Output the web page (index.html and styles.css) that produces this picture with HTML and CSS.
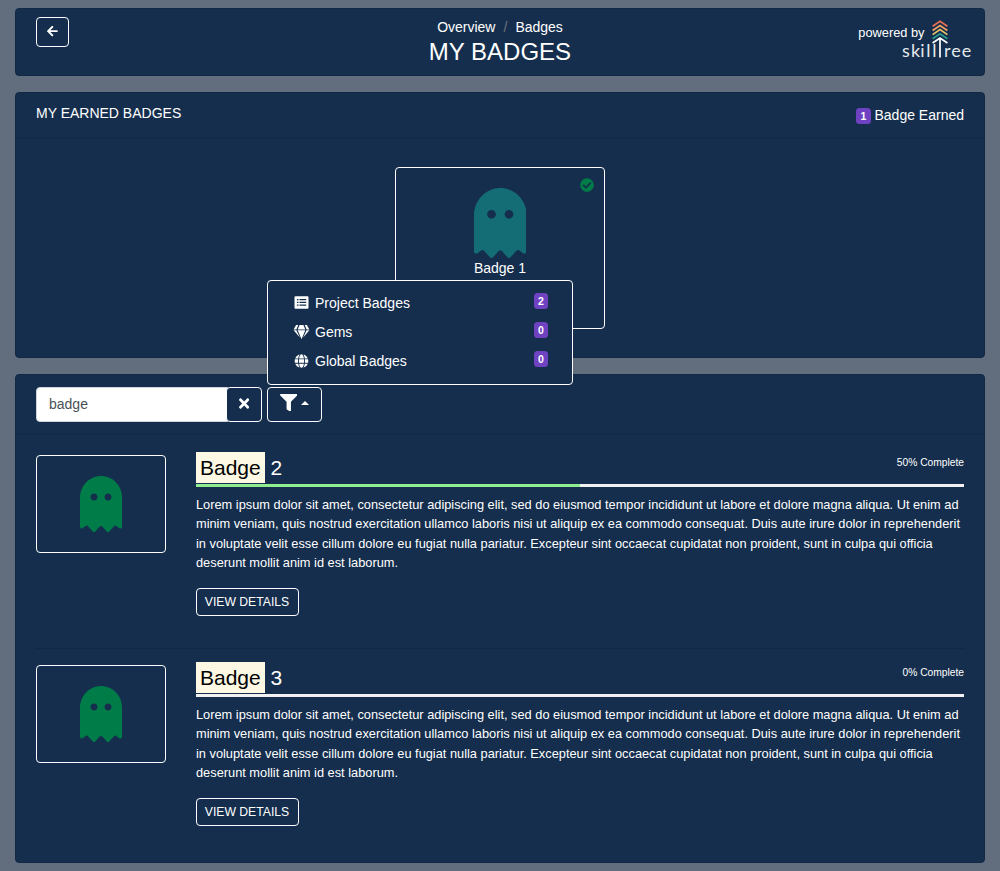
FILE: index.html
```html
<!DOCTYPE html>
<html lang="en">
<head>
<meta charset="utf-8">
<title>My Badges</title>
<link rel="stylesheet" href="styles.css">
</head>
<body>
<svg class="defs" width="0" height="0">
  <symbol id="ghost" viewBox="0 0 384 512"><path d="M186.1.09C81.01 3.24 0 94.92 0 200.05v263.92c0 14.26 17.23 21.39 27.31 11.31l24.92-18.53c6.66-4.95 16-3.99 21.51 2.21l42.95 48.35c6.25 6.25 16.38 6.25 22.63 0l40.72-45.85c6.37-7.17 17.56-7.17 23.92 0l40.72 45.85c6.25 6.25 16.38 6.25 22.63 0l42.95-48.35c5.51-6.2 14.85-7.17 21.51-2.21l24.92 18.53c10.08 10.08 27.31 2.95 27.31-11.31V192C384 84 294.83-3.17 186.1.09zM128 224c-17.67 0-32-14.33-32-32s14.33-32 32-32 32 14.33 32 32-14.33 32-32 32zm128 0c-17.67 0-32-14.33-32-32s14.33-32 32-32 32 14.33 32 32-14.33 32-32 32z"/></symbol>
</svg>
<div class="page">
  <header class="card top">
    <button class="btn back" aria-label="Back"><svg width="10.720" height="12.250" viewBox="0 0 448 512"><path d="M257.5 445.1l-22.2 22.2c-9.4 9.4-24.6 9.4-33.9 0L7 273c-9.4-9.4-9.4-24.6 0-33.9L201.4 44.7c9.4-9.4 24.6-9.4 33.9 0l22.2 22.2c9.5 9.5 9.3 25-.4 34.3L136.6 216H424c13.3 0 24 10.7 24 24v32c0 13.3-10.7 24-24 24H136.6l120.5 114.800c9.800 9.300 10 24.800.4 34.300z"/></svg></button>
    <div class="heading">
      <nav class="crumbs"><span>Overview</span><span class="slash">/</span><span>Badges</span></nav>
      <h1>MY BADGES</h1>
    </div>
    <div class="brand">
      <span class="powered">powered by</span>
      <svg class="logo" width="72" height="44" viewBox="0 0 72 44">
        <g fill="none" stroke-width="1.700">
          <path stroke="#e76f51" d="M30.600 10.200 38 5.200 45.400 10.200"/>
          <path stroke="#f4a261" d="M30.600 14.500 38 9.500 45.400 14.500"/>
          <path stroke="#e9c46a" d="M30.600 18.600 38 13.600 45.400 18.600"/>
          <path stroke="#2a9d8f" d="M30.600 22.700 38 17.700 45.400 22.700"/>
          <path stroke="#fff" d="M30.600 27 38 22 45.400 27M38 22V41.500"/>
        </g>
        <text class="wordmark" y="41" x="0 9 18.300 24.300 30.300">skill</text>
        <text class="wordmark" y="41" x="42 49.200 59.800">ree</text>
      </svg>
    </div>
  </header>

  <section class="card earned">
    <div class="card-head"><h2>MY EARNED BADGES</h2><div class="count"><span class="pill">1</span> Badge Earned</div></div>
    <div class="earned-body">
      <div class="badge-tile">
        <svg class="check" width="14" height="14" viewBox="0 0 512 512"><path d="M504 256c0 136.967-111.033 248-248 248S8 392.967 8 256 119.033 8 256 8s248 111.033 248 248zM227.314 387.314l184-184c6.248-6.248 6.248-16.379 0-22.627l-22.627-22.627c-6.248-6.249-16.379-6.249-22.628 0L216 308.118l-70.059-70.059c-6.248-6.248-16.379-6.248-22.628 0l-22.627 22.627c-6.248 6.248-6.248 16.379 0 22.627l104 104c6.249 6.249 16.379 6.249 22.628.001z"/></svg>
        <svg class="ghost-teal" width="52.5" height="70"><use href="#ghost"/></svg>
        <div class="tile-name">Badge 1</div>
      </div>
    </div>
  </section>

  <section class="card catalog">
    <div class="toolbar">
      <div class="search"><input type="text" value="badge" aria-label="Search badges"><button class="btn clear" aria-label="Clear"><svg width="10.300" height="15" viewBox="0 0 352 512"><path d="M242.720 256l100.070-100.070c12.280-12.280 12.280-32.190 0-44.480l-22.240-22.240c-12.280-12.280-32.190-12.280-44.480 0L176 189.280 75.930 89.210c-12.280-12.280-32.190-12.280-44.480 0L9.210 111.450c-12.280 12.280-12.280 32.190 0 44.480L109.280 256 9.210 356.070c-12.280 12.280-12.280 32.190 0 44.480l22.240 22.240c12.280 12.280 32.200 12.280 44.480 0L176 322.720l100.070 100.070c12.280 12.280 32.200 12.280 44.480 0l22.240-22.240c12.280-12.280 12.280-32.190 0-44.480L242.720 256z"/></svg></button></div>
      <div class="filter">
        <button class="btn filter-btn" aria-label="Filter"><svg width="17.500" height="17.500" viewBox="0 0 512 512"><path d="M487.976 0H24.028C2.710 0-8.047 25.866 7.058 40.971L192 225.941V432c0 7.831 3.821 15.170 10.237 19.662l80 55.980C298.020 518.690 320 507.493 320 487.980V225.941l184.947-184.970C520.021 25.896 509.338 0 487.976 0z"/></svg><span class="caret"></span></button>
        <div class="menu">
          <div class="item"><svg width="15" height="15" viewBox="0 0 15 15"><path fill-rule="evenodd" d="M1.500 1.300h12a1 1 0 0 1 1 1v10.400a1 1 0 0 1-1 1h-12a1 1 0 0 1-1-1V2.300a1 1 0 0 1 1-1zM2.900 3.900V5.200H4.500V3.900zM5.500 3.900V5.200H12.200V3.900zM2.900 6.700V8H4.500V6.700zM5.500 6.700V8H12.200V6.700zM2.900 9.500V10.800H4.500V9.500zM5.500 9.500V10.800H12.200V9.500z"/></svg><span>Project Badges</span><span class="pill">2</span></div>
          <div class="item"><svg width="15.750" height="14" viewBox="0 0 576 512"><path d="M485.500 0L576 160H474.900L405.700 0h79.800zm-128 0l69.200 160H149.300L218.500 0h139zm-267 0h79.800l-69.200 160H0L90.500 0zM0 192h100.700l123 251.700c1.500 3.100-2.700 5.900-5 3.300L0 192zm148.200 0h279.600l-137 318.200c-1 2.400-4.500 2.400-5.500 0L148.200 192zm204.100 251.700l123-251.700H576L357.300 446.900c-2.300 2.700-6.500-.1-5-3.200z"/></svg><span>Gems</span><span class="pill">0</span></div>
          <div class="item"><svg width="13.560" height="14" viewBox="0 0 496 512"><path d="M336.500 160C322 70.700 287.800 8 248 8s-74 62.700-88.500 152h177zM152 256c0 22.200 1.200 43.500 3.300 64h185.300c2.100-20.500 3.300-41.800 3.300-64s-1.200-43.500-3.300-64H155.300c-2.100 20.500-3.300 41.800-3.300 64zm324.700-96c-28.600-67.900-86.500-120.400-158-141.600 24.400 33.800 41.200 84.700 50 141.600h108zM177.200 18.400C105.800 39.600 47.800 92.100 19.300 160h108c8.700-56.900 25.500-107.800 49.900-141.600zM487.400 192H372.700c2.100 21 3.300 42.500 3.300 64s-1.200 43-3.300 64h114.600c5.500-20.500 8.600-41.800 8.600-64s-3.100-43.500-8.500-64zM120 256c0-21.500 1.200-43 3.300-64H8.600C3.200 212.500 0 233.800 0 256s3.200 43.500 8.600 64h114.600c-2-21-3.200-42.500-3.200-64zm39.500 96c14.500 89.300 48.700 152 88.500 152s74-62.700 88.500-152h-177zm159.300 141.600c71.400-21.200 129.400-73.700 158-141.600h-108c-8.800 56.900-25.600 107.800-50 141.600zM19.300 352c28.600 67.900 86.500 120.400 158 141.600-24.400-33.800-41.200-84.700-50-141.600h-108z"/></svg><span>Global Badges</span><span class="pill">0</span></div>
        </div>
      </div>
    </div>
    <div class="list">
      <article class="row">
        <div class="thumb"><svg width="42" height="56"><use href="#ghost"/></svg></div>
        <div class="info">
          <div class="title-line"><h3><mark>Badge</mark> 2</h3><small>50% Complete</small></div>
          <div class="progress"><div class="bar" style="width:50%"></div></div>
          <p>Lorem ipsum dolor sit amet, consectetur adipiscing elit, sed do eiusmod tempor incididunt ut labore et dolore magna aliqua. Ut enim ad minim veniam, quis nostrud exercitation ullamco laboris nisi ut aliquip ex ea commodo consequat. Duis aute irure dolor in reprehenderit in voluptate velit esse cillum dolore eu fugiat nulla pariatur. Excepteur sint occaecat cupidatat non proident, sunt in culpa qui officia deserunt mollit anim id est laborum.</p>
          <button class="btn details">VIEW DETAILS</button>
        </div>
      </article>
      <article class="row">
        <div class="thumb"><svg width="42" height="56"><use href="#ghost"/></svg></div>
        <div class="info">
          <div class="title-line"><h3><mark>Badge</mark> 3</h3><small>0% Complete</small></div>
          <div class="progress"><div class="bar" style="width:0%"></div></div>
          <p>Lorem ipsum dolor sit amet, consectetur adipiscing elit, sed do eiusmod tempor incididunt ut labore et dolore magna aliqua. Ut enim ad minim veniam, quis nostrud exercitation ullamco laboris nisi ut aliquip ex ea commodo consequat. Duis aute irure dolor in reprehenderit in voluptate velit esse cillum dolore eu fugiat nulla pariatur. Excepteur sint occaecat cupidatat non proident, sunt in culpa qui officia deserunt mollit anim id est laborum.</p>
          <button class="btn details">VIEW DETAILS</button>
        </div>
      </article>
    </div>
  </section>
</div>
</body>
</html>
```
FILE: styles.css
```css
* { box-sizing: border-box; }
body {
  margin: 0;
  background: #626d7d;
  color: #fff;
  font: 14px/21px "Liberation Sans", Arial, sans-serif;
}
svg { display: block; fill: currentColor; flex: none; }
h1, h2, h3, p { margin: 0; font-weight: 400; }
.defs { position: absolute; }
.page { display: flex; flex-direction: column; gap: 16px; padding: 8px 15px; }
.card { background: #152e4d; border: 1px solid #122844; border-radius: 4px; }
.btn {
  display: flex;
  align-items: center;
  justify-content: center;
  padding: 0;
  color: #fff;
  background: #152e4d;
  border: 1px solid #fff;
  border-radius: 4px;
  font-family: inherit;
}

.top { display: grid; grid-template-columns: 1fr auto 1fr; height: 68px; padding: 8px 12px 0 20px; }
.back { width: 33px; height: 30px; padding-bottom: 1px; }
.heading { margin-left: -8px; text-align: center; }
.crumbs { display: flex; justify-content: center; line-height: 21px; }
.slash { color: #6c757d; padding: 0 8px; }
h1 { font-size: 24px; line-height: 27px; }
.brand { display: flex; justify-content: flex-end; margin-right: -2px; }
.powered { font-size: 12.800px; line-height: 19px; margin: 6px -22.500px 0 0; }
.logo { margin-top: -1px; overflow: visible; }
.wordmark { font: 400 18px Lato, sans-serif; fill: #e4e8ec; }

.earned { height: 266px; }
.card-head { display: flex; justify-content: space-between; height: 46px; padding: 10px 20px 0; border-bottom: 1px solid #122844; }
h2 { font-size: 14px; line-height: 21px; }
.count { padding-top: 2px; }
.pill {
  display: inline-block;
  padding: 3px 4.200px 2px;
  border-radius: 3.500px;
  background: #6f42c1;
  color: #fff;
  font-size: 10.500px;
  font-weight: 700;
  line-height: 11px;
}
.earned-body { display: flex; justify-content: center; padding-top: 28px; }
.badge-tile { position: relative; width: 210px; height: 162px; padding-top: 20px; border: 1px solid #fff; border-radius: 4px; text-align: center; }
.badge-tile .ghost-teal { margin: 0 auto; color: #146c75; }
.check { position: absolute; top: 10px; right: 10px; color: #007c49; }

.catalog { height: 489px; }
.toolbar { display: flex; gap: 5px; height: 60px; padding: 12px 20px; border-bottom: 1px solid #122844; }
.search { display: flex; }
.search input { width: 192px; height: 35px; padding: 0 12px 2px; border: 1px solid #ced4da; border-radius: 4px 0 0 4px; background: #fff; color: #495057; font: inherit; }
.clear { width: 36px; height: 35px; margin-left: -2px; padding: 0 0 2px; }
.filter { position: relative; }
.filter-btn { width: 55px; height: 35px; gap: 4px; padding: 0 0 4px; }
.caret { border: 4px solid transparent; border-top: 0; border-bottom-color: #fff; margin-top: 1px; }
.menu { position: absolute; left: 0; bottom: 37px; width: 306px; height: 105px; padding: 8px 24px 0; background: #152e4d; border: 1px solid #fff; border-radius: 4px; }
.item { display: flex; align-items: center; height: 29px; }
.item svg { width: 19px; margin: -2px 4px 0 0; }
.item .pill { margin: -6px 0 0 auto; }

.list { padding: 0 20px; }
.row { display: flex; gap: 30px; height: 214px; padding-top: 17px; border-bottom: 1px solid #122844; }
.row + .row { height: 200px; padding-top: 13px; border: 0; }
.thumb { display: flex; justify-content: center; align-items: center; width: 130px; height: 98px; margin-top: 3px; border: 1px solid #fff; border-radius: 4px; color: #007c49; }
.info { flex: 1; }
.title-line { display: flex; justify-content: space-between; height: 32px; }
h3 { font-size: 21px; line-height: 31px; }
mark { display: inline-block; padding: 0 4px; background: #fcf8e3; color: #000; }
small { font-size: 10.240px; line-height: 15px; padding-top: 3px; }
.progress { height: 3px; background: #f1f1f1; }
.bar { height: 3px; background: #90ee90; }
.info p { font-size: 12.800px; line-height: 19.250px; margin-top: 8px; }
.details { width: 103px; height: 28px; margin-top: 16px; padding-right: 1px; font-size: 12.200px; }
```
